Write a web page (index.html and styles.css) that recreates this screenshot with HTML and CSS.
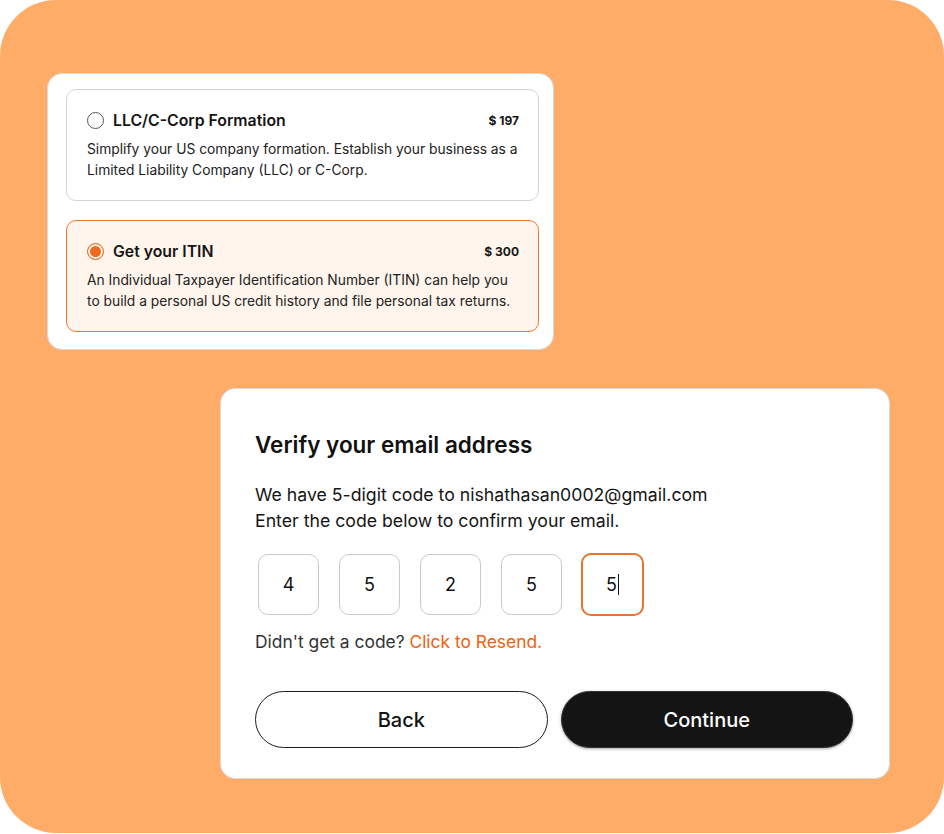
FILE: index.html
```html
<!DOCTYPE html>
<html>
<head>
<meta charset="utf-8">
<link rel="stylesheet" href="styles.css">
</head>
<body>
<div class="canvas">
  <div class="plans">
    <div class="plan">
      <div class="plan-head">
        <span class="radio"></span>
        <span class="plan-title">LLC/C-Corp Formation</span>
        <span class="price">$ 197</span>
      </div>
      <p class="plan-desc">Simplify your US company formation. Establish your business as a Limited Liability Company (LLC) or C-Corp.</p>
    </div>
    <div class="plan selected">
      <div class="plan-head">
        <span class="radio on"></span>
        <span class="plan-title">Get your ITIN</span>
        <span class="price">$ 300</span>
      </div>
      <p class="plan-desc">An Individual Taxpayer Identification Number (ITIN) can help you to build a personal US credit history and file personal tax returns.</p>
    </div>
  </div>

  <div class="verify">
    <h1 class="v-title">Verify your email address</h1>
    <p class="v-text">We have 5-digit code to nishathasan0002@gmail.com<br>Enter the code below to confirm your email.</p>
    <div class="codes">
      <div class="code">4</div>
      <div class="code">5</div>
      <div class="code">2</div>
      <div class="code">5</div>
      <div class="code focus">5<span class="caret"></span></div>
    </div>
    <p class="resend">Didn't get a code? <span class="link">Click to Resend.</span></p>
    <div class="actions">
      <button class="btn back">Back</button>
      <button class="btn continue">Continue</button>
    </div>
  </div>
</div>
</body>
</html>
```
FILE: styles.css
```css
* { box-sizing: border-box; }
html, body { margin: 0; padding: 0; background: #ffffff; }
body { font-family: Inter, "Noto Sans", sans-serif; color: #141414; }

.canvas {
  width: 944px;
  height: 833px;
  background: #FFAC69;
  border-radius: 56px;
  padding: 73px 0 0 47px;
  display: flex;
  flex-direction: column;
}

.plans {
  width: 507px;
  background: #fff;
  border: 1.5px solid #d8d8d8;
  border-radius: 15px;
  padding: 15px 14px 17px 18px;
  display: flex;
  flex-direction: column;
  gap: 19px;
}

.plan {
  border: 1px solid #d4d4d4;
  border-radius: 10px;
  padding: 20px 19px 19px 20px;
  background: #fff;
}
.plan.selected {
  background: #FFF5EC;
  border: 1.2px solid #F07A2E;
}
.plan-head {
  display: flex;
  align-items: center;
  height: 21px;
}
.radio {
  width: 17px;
  height: 17px;
  border-radius: 50%;
  border: 1px solid #555;
  margin-right: 9px;
  flex: none;
}
.radio.on {
  border: 1.5px solid #EE6A1C;
  background: #EE6A1C;
  box-shadow: inset 0 0 0 2px #fff;
}
.plan-title {
  font-size: 15.8px;
  font-weight: 600;
  color: #151515;
  flex: 1;
}
.price {
  font-size: 12px;
  font-weight: 700;
  color: #151515;
}
.plan-desc {
  margin: 8px 0 0 0;
  font-size: 13.8px;
  line-height: 21px;
  color: #222;
}

.verify {
  margin: 38px 0 0 173px;
  width: 670px;
  height: 391px;
  background: #fff;
  border: 1.5px solid #d8d8d8;
  border-radius: 15px;
  padding: 42px 36px 30px 34px;
  display: flex;
  flex-direction: column;
}
.v-title {
  margin: 0;
  font-size: 22.5px;
  line-height: 28px;
  font-weight: 600;
  color: #111;
}
.v-text {
  margin: 23px 0 0 0;
  font-size: 17.7px;
  line-height: 26px;
  color: #151515;
}
.codes {
  margin-top: 19px;
  display: flex;
  align-items: center;
  gap: 20px;
  padding-left: 3px;
}
.code {
  width: 61px;
  height: 61px;
  border: 1px solid #c9c9c9;
  border-radius: 10px;
  display: flex;
  align-items: center;
  justify-content: center;
  font-size: 18px;
  color: #111;
}
.code.focus {
  width: 63px;
  height: 63px;
  border: 2px solid #E8732C;
  margin-left: -1px;
}
.caret {
  display: inline-block;
  width: 1px;
  height: 21px;
  background: #111;
  margin-left: 1px;
}
.resend {
  margin: 14px 0 0 0;
  font-size: 17.4px;
  line-height: 24px;
  color: #333;
}
.link { color: #F2600F; }

.actions {
  margin-top: 37px;
  display: flex;
  gap: 13px;
}
.btn {
  flex: 1;
  height: 57px;
  border-radius: 29px;
  font-family: Inter, "Noto Sans", sans-serif;
  font-size: 20px;
  font-weight: 500;
}
.btn.back {
  background: #fff;
  border: 1.5px solid #1e1e1e;
  color: #141414;
}
.btn.continue {
  background: #141414;
  border: 1.5px solid #333;
  color: #fff;
  box-shadow: 0 1px 3px rgba(0,0,0,0.35);
}
```
